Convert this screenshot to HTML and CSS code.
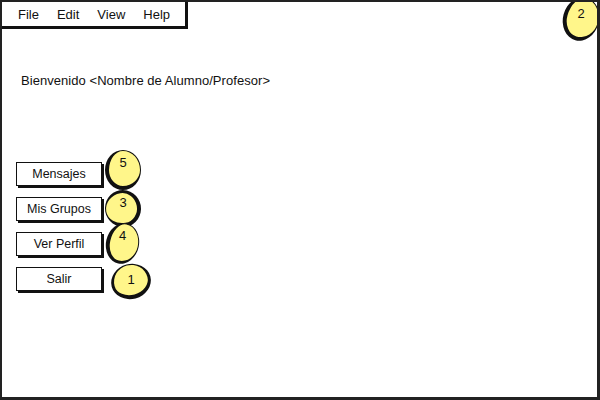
FILE: index.html
```html
<!DOCTYPE html>
<html>
<head>
<meta charset="utf-8">
<link rel="stylesheet" href="styles.css">
</head>
<body>
<div class="frame">
  <div class="menubar">
    <span>File</span><span>Edit</span><span>View</span><span>Help</span>
  </div>
  <span class="badge badge-2">2</span>
  <p class="welcome">Bienvenido &lt;Nombre de Alumno/Profesor&gt;</p>
  <div class="actions">
    <div class="row"><button class="btn">Mensajes</button><span class="badge badge-5">5</span></div>
    <div class="row"><button class="btn">Mis Grupos</button><span class="badge badge-3">3</span></div>
    <div class="row"><button class="btn">Ver Perfil</button><span class="badge badge-4">4</span></div>
    <div class="row"><button class="btn">Salir</button><span class="badge badge-1">1</span></div>
  </div>
</div>
</body>
</html>
```
FILE: styles.css
```css
html, body {
  margin: 0;
  padding: 0;
  background: #fff;
}
body {
  font-family: "Liberation Sans", Arial, sans-serif;
  color: #111;
}
.frame {
  position: relative;
  width: 600px;
  height: 400px;
  box-sizing: border-box;
  border-top: 2px solid #222;
  border-left: 2px solid #222;
  border-right: 3px solid #222;
  border-bottom: 3px solid #222;
  overflow: hidden;
}
.menubar {
  margin: -2px 0 0 -2px;
  width: 188px;
  height: 29px;
  box-sizing: border-box;
  border: 2px solid #111;
  border-right-width: 3px;
  border-bottom-width: 3px;
  background: #fff;
  display: flex;
  align-items: center;
  gap: 18px;
  padding-left: 16px;
  font-size: 13px;
}
.welcome {
  margin: 44px 0 0 19px;
  font-size: 13px;
  line-height: 16px;
  letter-spacing: 0.05px;
}
.actions {
  margin: 73px 0 0 14px;
  display: flex;
  flex-direction: column;
  gap: 11px;
}
.row {
  position: relative;
  height: 24px;
}
.btn {
  display: block;
  width: 86px;
  height: 24px;
  box-sizing: border-box;
  background: #fff;
  border: 1.5px solid #111;
  box-shadow: 2px 2px 0 #111;
  font-family: "Liberation Sans", Arial, sans-serif;
  font-size: 12.5px;
  color: #111;
  padding: 0;
}
.badge {
  position: absolute;
  box-sizing: border-box;
  font-size: 13px;
  text-align: center;
  line-height: 16px;
  padding-top: 5px;
  color: #111;
  z-index: 0;
}
.badge::before {
  content: "";
  position: absolute;
  inset: 0;
  box-sizing: border-box;
  background: #fff68a;
  border: 1.5px solid #111;
  border-radius: 50%;
  z-index: -1;
}
.badge-5 {
  left: 89px; top: -12px; width: 36px; height: 40px;
}
.badge-5::before { border-left-width: 4px; border-bottom-width: 4px; }
.badge-3 {
  left: 89px; top: -7px; width: 36px; height: 37px;
}
.badge-3::before {
  border-top-width: 3px; border-right-width: 4px; border-bottom-width: 4px;
  transform: rotate(-10deg);
}
.badge-4 {
  left: 90px; top: -9px; width: 33px; height: 41px;
}
.badge-4::before {
  border-left-width: 4px; border-bottom-width: 3px;
  transform: rotate(12deg);
}
.badge-1 {
  left: 95px; top: -3px; width: 40px; height: 35px;
  padding-top: 8px;
}
.badge-1::before {
  border-left-width: 3px; border-bottom-width: 4px; border-right-width: 3px;
  transform: rotate(-15deg);
}
.badge-2 {
  left: 561px; top: -5px; width: 36px; height: 44px;
  padding-top: 9px;
}
.badge-2::before {
  border-left-width: 4px; border-bottom-width: 4px;
  transform: rotate(15deg);
}
```
